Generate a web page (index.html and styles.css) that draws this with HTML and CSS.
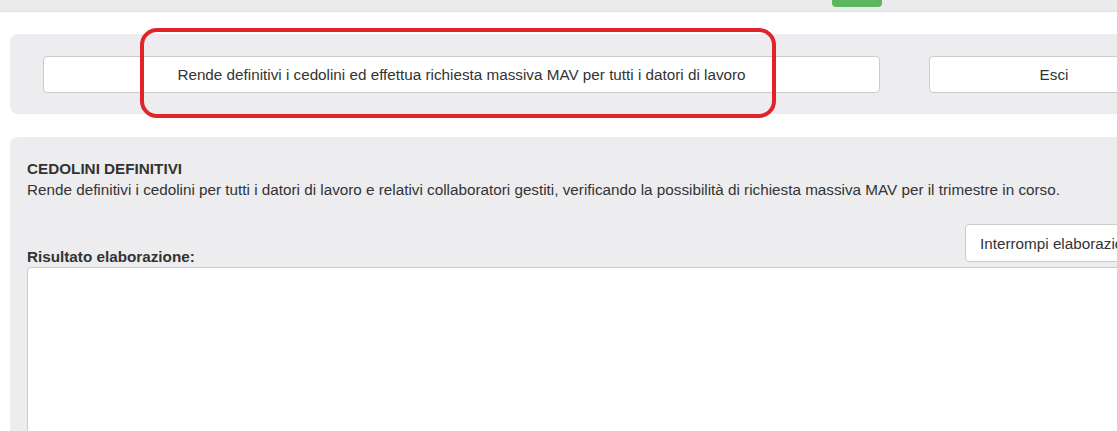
FILE: index.html
```html
<!DOCTYPE html>
<html lang="it">
<head>
<meta charset="utf-8">
<title>Cedolini definitivi</title>
<link rel="stylesheet" href="styles.css">
</head>
<body>
<div class="topbar">
  <div class="top-green"></div>
</div>
<div class="page">
  <div class="panel actions">
    <button class="btn btn-main">Rende definitivi i cedolini ed effettua richiesta massiva MAV per tutti i datori di lavoro</button>
    <button class="btn btn-exit">Esci</button>
    <div class="annotation"></div>
  </div>
  <div class="panel content">
    <div class="title">CEDOLINI DEFINITIVI</div>
    <div class="desc">Rende definitivi i cedolini per tutti i datori di lavoro e relativi collaboratori gestiti, verificando la possibilità di richiesta massiva MAV per il trimestre in corso.</div>
    <div class="result-head">
      <label class="result-label">Risultato elaborazione:</label>
      <button class="btn btn-stop">Interrompi elaborazione</button>
    </div>
    <textarea class="result-box"></textarea>
  </div>
</div>
</body>
</html>
```
FILE: styles.css
```css
html, body {
  margin: 0;
  padding: 0;
  background: #ffffff;
  overflow: hidden;
  width: 1117px;
  height: 431px;
  font-family: "Liberation Sans", Arial, sans-serif;
  font-size: 15.25px;
  color: #333333;
}
.topbar {
  height: 11px;
  background: #ebebed;
  border-bottom: 1px solid #e2e2e4;
  display: flex;
  padding-left: 832px;
}
.top-green {
  width: 50px;
  height: 7px;
  background: #5cb85c;
  border-radius: 0 0 4px 4px;
}
.page {
  padding: 22px 0 0 10px;
  display: flex;
  flex-direction: column;
  gap: 23px;
  width: 1200px;
}
.panel {
  background: #ededef;
  border-radius: 8px;
}
.actions {
  position: relative;
  height: 80px;
  box-sizing: border-box;
  padding: 22px 0 0 33px;
  display: flex;
  gap: 49px;
}
.btn {
  font-family: "Liberation Sans", Arial, sans-serif;
  font-size: 15.25px;
  color: #333333;
  background: #ffffff;
  border: 1px solid #cccccc;
  border-radius: 4px;
  height: 37px;
  padding: 0 12px;
  cursor: pointer;
}
.btn-main {
  width: 837px;
}
.btn-exit {
  width: 250px;
}
.annotation {
  position: absolute;
  left: 130px;
  top: -6px;
  width: 628px;
  height: 82px;
  border: 4px solid #e3232b;
  border-radius: 17px;
  pointer-events: none;
}
.content {
  height: 320px;
  box-sizing: border-box;
  padding: 23px 0 0 17px;
}
.title {
  font-weight: bold;
  line-height: 17px;
}
.desc {
  line-height: 22px;
  margin-top: 2px;
}
.result-head {
  display: flex;
  justify-content: space-between;
  align-items: flex-end;
  margin-top: 23px;
  width: 1138px;
}
.result-label {
  font-weight: bold;
  line-height: 17px;
  margin-bottom: -3px;
}
.btn-stop {
  width: 200px;
  height: 38px;
  text-align: left;
  padding-left: 14px;
  white-space: nowrap;
}
.result-box {
  display: block;
  margin-top: 5px;
  width: 1140px;
  height: 200px;
  box-sizing: border-box;
  border: 1px solid #cccccc;
  border-radius: 4px;
  background: #ffffff;
  resize: none;
}
```
